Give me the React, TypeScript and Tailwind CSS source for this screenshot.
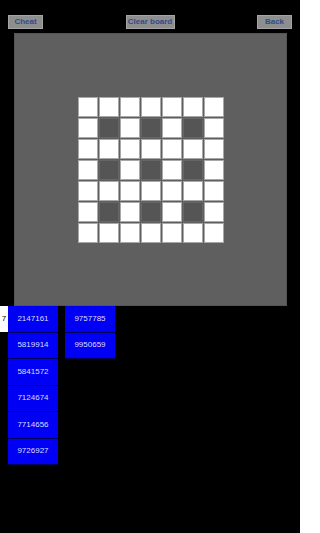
const dark = (r: number, c: number) => r % 2 === 1 && c % 2 === 1 && c < 6 && r < 6;

const col1 = ["2147161", "5819914", "5841572", "7124674", "7714656", "9726927"];
const col2 = ["9757785", "9950659"];

function TopButton({ label, w }: { label: string; w: string }) {
  return (
    <button
      className={`h-[14px] ${w} bg-[#8e8e8e] border border-[#a4a4a4] text-[8px] font-bold text-[#2f4b8c] leading-none flex items-center justify-center`}
    >
      {label}
    </button>
  );
}

function NumButton({ n }: { n: string }) {
  return (
    <div className="h-[26.5px] w-[50px] bg-[#0000f5] border-b border-[#00005a] text-[#dcdcff] text-[8px] flex items-center justify-center">
      {n}
    </div>
  );
}

export default function App() {
  return (
    <div className="w-[300px] h-[533px] bg-black overflow-hidden" style={{ fontFamily: '"Liberation Sans", Arial, sans-serif' }}>
      <div className="flex justify-between items-start px-[8px] pt-[15px]">
        <TopButton label="Cheat" w="w-[35px]" />
        <TopButton label="Clear board" w="w-[49px]" />
        <TopButton label="Back" w="w-[35px]" />
      </div>
      <div className="mt-[4px] ml-[14px] w-[273px] h-[273px] bg-[#5f5f5f] border border-[#555] flex items-center justify-center">
        <div className="grid grid-cols-7 gap-[1px]">
          {Array.from({ length: 49 }).map((_, i) => {
            const r = Math.floor(i / 7);
            const c = i % 7;
            return dark(r, c) ? (
              <div key={i} className="w-[20px] h-[20px] bg-[#555555] border border-[#666]" />
            ) : (
              <div key={i} className="w-[20px] h-[20px] bg-white border border-[#a8a8a8]" />
            );
          })}
        </div>
      </div>
      <div className="flex items-start">
        <div className="w-[8px] h-[26px] bg-white text-black text-[8px] flex items-center justify-center">7</div>
        <div className="flex flex-col">
          {col1.map((n) => (
            <NumButton key={n} n={n} />
          ))}
        </div>
        <div className="flex flex-col ml-[7px]">
          {col2.map((n) => (
            <NumButton key={n} n={n} />
          ))}
        </div>
      </div>
    </div>
  );
}
